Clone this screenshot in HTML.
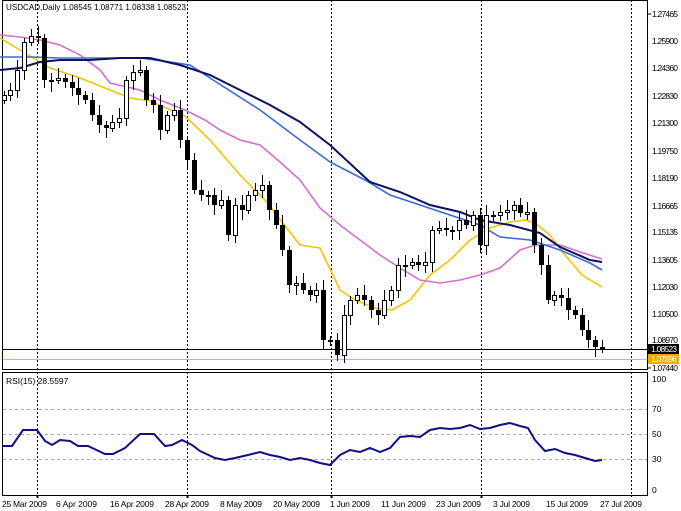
<!DOCTYPE html>
<html><head><meta charset="utf-8"><style>
html,body{margin:0;padding:0;background:#fff;width:681px;height:511px;overflow:hidden}
svg text{font-family:"Liberation Sans",sans-serif;font-size:8.5px;fill:#000}
</style></head><body>
<svg id="s" width="681" height="511" xmlns="http://www.w3.org/2000/svg">
<rect width="681" height="511" fill="#fff"/>
<rect x="2.5" y="0.5" width="645" height="369" fill="none" stroke="#000"/>
<rect x="2.5" y="372.5" width="645" height="123" fill="none" stroke="#000"/>
<g stroke="#000" stroke-dasharray="2,2">
<line x1="37.5" y1="0" x2="37.5" y2="497"/><line x1="187.5" y1="0" x2="187.5" y2="497"/>
<line x1="331.5" y1="0" x2="331.5" y2="497"/><line x1="481.5" y1="0" x2="481.5" y2="497"/>
<line x1="631.5" y1="0" x2="631.5" y2="497"/>
</g>
<g stroke="#000" stroke-width="2" stroke-dasharray="2,2">
<line x1="37.5" y1="496" x2="37.5" y2="500"/><line x1="187.5" y1="496" x2="187.5" y2="500"/>
<line x1="331.5" y1="496" x2="331.5" y2="500"/><line x1="481.5" y1="496" x2="481.5" y2="500"/>
</g>
<g stroke="#aaa" stroke-dasharray="3,3">
<line x1="3" y1="409.5" x2="647" y2="409.5"/><line x1="3" y1="434.5" x2="647" y2="434.5"/><line x1="3" y1="459.5" x2="647" y2="459.5"/>
</g>
<line x1="3" y1="349.5" x2="647" y2="349.5" stroke="#000"/>
<line x1="3" y1="359.5" x2="647" y2="359.5" stroke="#f2c200"/>
<polyline fill="none" stroke="#f5c400" stroke-width="1.6" points="0,38 20,50 40,62 50,68 80,78 130,98 150,101 185,116 210,140 240,175 265,200 300,245 320,248 340,290 355,300 375,308 392,310 410,300 430,275 450,260 470,240 490,228 510,222 525,220 535,223 550,235 565,255 582,275 602,287"/>
<polyline fill="none" stroke="#d070d0" stroke-width="1.6" points="0,35 20,37 40,40 60,45 80,55 100,70 110,83 140,90 160,100 185,110 205,120 220,130 240,140 260,145 280,162 300,180 320,208 340,225 360,240 380,255 400,268 420,280 440,283 460,280 480,275 500,268 520,250 535,245 560,245 580,252 602,259"/>
<polyline fill="none" stroke="#3a6ad8" stroke-width="1.6" points="0,57 30,57 60,58 100,58 140,58 170,62 190,65 210,78 260,110 300,140 330,162 365,180 390,195 420,205 450,215 480,225 500,237 530,240 560,250 590,263 602,270"/>
<polyline fill="none" stroke="#101060" stroke-width="2" points="0,70 20,68 40,62 60,60 90,60 120,58 150,58 180,65 210,75 240,90 270,105 300,122 330,145 370,182 400,192 430,205 460,212 480,220 510,225 540,233 560,247 590,260 602,262"/>
<g id="c"></g>
<polyline fill="none" stroke="#101080" stroke-width="2" points="3,446 12,446 23,430 37,430 45,441 52,445 60,440 70,441 78,446 88,446 105,454 113,454 125,448 140,434 154,434 165,446 172,445 182,440 192,445 200,451 215,458 225,460 235,458 248,455 260,452 270,455 280,457 290,460 300,458 310,460 320,463 330,465 340,455 350,450 360,452 370,448 380,452 390,448 400,437 410,436 420,437 430,430 440,428 450,429 460,428 470,425 480,429 490,428 500,425 510,423 520,426 528,428 535,440 545,451 555,449 565,453 575,455 585,458 595,461 602,460"/>
<text x="6" y="10" textLength="180" lengthAdjust="spacingAndGlyphs">USDCAD,Daily  1.08545 1.08771 1.08338 1.08523</text>
<text x="6" y="384">RSI(15) 28.5597</text>
<g>
<text x="652" y="17" textLength="26">1.27465</text><text x="652" y="44" textLength="26">1.25900</text><text x="652" y="71" textLength="26">1.24360</text>
<text x="652" y="99" textLength="26">1.22830</text><text x="652" y="126" textLength="26">1.21300</text><text x="652" y="154" textLength="26">1.19750</text>
<text x="652" y="181" textLength="26">1.18190</text><text x="652" y="209" textLength="26">1.16665</text><text x="652" y="235" textLength="26">1.15135</text>
<text x="652" y="263" textLength="26">1.13605</text><text x="652" y="290" textLength="26">1.12030</text><text x="652" y="317" textLength="26">1.10500</text>
<text x="652" y="343" textLength="26">1.08970</text><text x="652" y="371" textLength="26">1.07440</text>
</g>
<g stroke="#000"><line x1="647" y1="14" x2="651" y2="14"/><line x1="647" y1="368" x2="651" y2="368"/></g>
<rect x="648" y="344" width="31" height="10" fill="#000"/><text x="651" y="352" textLength="26" style="fill:#fff">1.08523</text>
<rect x="648" y="354" width="31" height="10" fill="#f5a800"/><text x="651" y="362" textLength="26" style="fill:#fff">1.07896</text>
<text x="652" y="382">100</text><text x="652" y="412">70</text><text x="652" y="437">50</text><text x="652" y="462">30</text><text x="652" y="493">0</text>
<g>
<text x="2" y="507" textLength="45">25 Mar 2009</text><text x="56" y="507" textLength="41">6 Apr 2009</text><text x="110" y="507" textLength="44">16 Apr 2009</text>
<text x="165" y="507" textLength="44">28 Apr 2009</text><text x="220" y="507" textLength="42">8 May 2009</text><text x="273" y="507" textLength="47">20 May 2009</text>
<text x="330" y="507" textLength="40">1 Jun 2009</text><text x="381" y="507" textLength="45">11 Jun 2009</text><text x="436" y="507" textLength="45">23 Jun 2009</text>
<text x="493" y="507" textLength="37">3 Jul 2009</text><text x="546" y="507" textLength="42">15 Jul 2009</text><text x="600" y="507" textLength="42">27 Jul 2009</text>
</g>
</svg>
<script>
var cl=[95,90,70,42,36,38,80,80,78,82,88,95,100,115,125,128,122,118,80,72,70,100,105,130,115,110,140,160,190,195,195,205,200,235,205,210,195,190,185,210,225,250,285,283,290,295,290,340,340,355,315,300,295,300,310,315,300,290,265,265,262,265,262,230,228,230,230,220,225,215,245,215,215,212,210,205,213,212,245,265,300,295,298,310,315,330,340,347,349];
var g=document.getElementById('c'),h='';
for(var i=0;i<cl.length;i++){
 var x=Math.round(3.6+6.8*i),c=cl[i],o=i?cl[i-1]:100;
 var t=Math.min(o,c),b=Math.max(o,c);if(b-t<2)b=t+2;
 var hi=t-4-(i%3)*3,lo=b+4+(i%4)*2;
 h+='<line x1="'+(x+0.5)+'" y1="'+hi+'" x2="'+(x+0.5)+'" y2="'+lo+'" stroke="#000"/>';
 if(c<o)h+='<rect x="'+(x-1.5)+'" y="'+t+'.5" width="4" height="'+(b-t)+'" fill="#fff" stroke="#000"/>';
 else h+='<rect x="'+(x-2)+'" y="'+t+'" width="5" height="'+(b-t)+'" fill="#000"/>';
}
g.innerHTML=h;
</script>
</body></html>
